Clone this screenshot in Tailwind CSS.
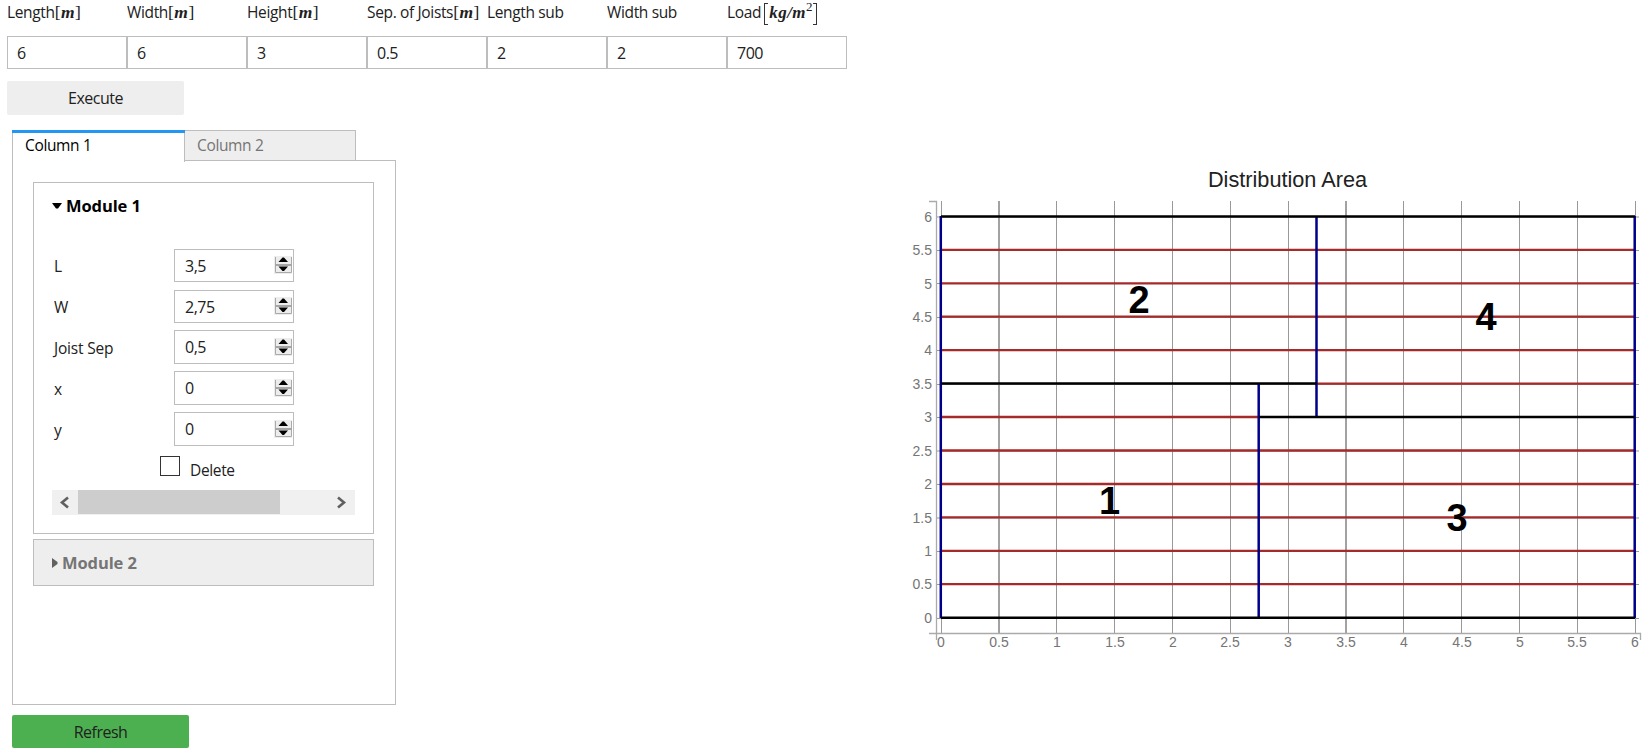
<!DOCTYPE html>
<html lang="en">
<head>
<meta charset="utf-8">
<title>Distribution Area</title>
<script src="https://cdn.jsdelivr.net/npm/@tailwindcss/browser@4"></script>
</head>
<body class="w-[1649px] h-[754px] overflow-hidden bg-white font-['Open_Sans','Noto_Sans',sans-serif] text-[15.5px] leading-5 tracking-[-0.35px] text-[#212121] flex">
<main class="w-[900px] shrink-0">
  <div class="pl-[7px] flex h-[36px] pt-[2px] whitespace-nowrap">
    <div class="w-[120px]">Length<span class="font-['Liberation_Serif',serif] text-[17.5px] tracking-[0.5px]">[<b class="italic">m</b>]</span></div>
    <div class="w-[120px]">Width<span class="font-['Liberation_Serif',serif] text-[17.5px] tracking-[0.5px]">[<b class="italic">m</b>]</span></div>
    <div class="w-[120px]">Height<span class="font-['Liberation_Serif',serif] text-[17.5px] tracking-[0.5px]">[<b class="italic">m</b>]</span></div>
    <div class="w-[120px]">Sep. of Joists<span class="font-['Liberation_Serif',serif] text-[17.5px] tracking-[0.5px]">[<b class="italic">m</b>]</span></div>
    <div class="w-[120px]">Length sub</div>
    <div class="w-[120px]">Width sub</div>
    <div class="w-[120px] flex">Load<span class="ml-[3px] mt-px w-[4px] h-[22px] border border-r-0 border-[#333]"></span><span class="font-['Liberation_Serif',serif] text-[17px] tracking-[0.5px] ml-[1px] mt-px"><b class="italic">kg/m</b></span><span class="font-['Liberation_Serif',serif] text-[13px] -mt-[5px]">2</span><span class="ml-[1px] mt-px w-[4px] h-[22px] border border-l-0 border-[#333]"></span></div>
  </div>
  <div class="pl-[7px] flex text-[16px] tracking-[-0.5px]">
    <div class="w-[120px] h-[33px] border border-[#bdbdbd] pl-[9px] leading-[33px]">6</div>
    <div class="w-[120px] h-[33px] border border-[#bdbdbd] pl-[9px] leading-[33px]">6</div>
    <div class="w-[120px] h-[33px] border border-[#bdbdbd] pl-[9px] leading-[33px]">3</div>
    <div class="w-[120px] h-[33px] border border-[#bdbdbd] pl-[9px] leading-[33px]">0.5</div>
    <div class="w-[120px] h-[33px] border border-[#bdbdbd] pl-[9px] leading-[33px]">2</div>
    <div class="w-[120px] h-[33px] border border-[#bdbdbd] pl-[9px] leading-[33px]">2</div>
    <div class="w-[120px] h-[33px] border border-[#bdbdbd] pl-[9px] leading-[33px]">700</div>
  </div>
  <button class="block ml-[7px] mt-[12px] w-[177px] h-[34px] rounded-[2px] bg-[#eee] text-[16px] tracking-[-0.5px]">Execute</button>
  <div class="ml-[12px] mt-[15px] w-[384px]">
    <div class="flex h-[30px]">
      <div class="relative z-10 w-[173px] h-[32px] bg-white border-l border-r border-[#bdbdbd] pl-[12px] pt-[5px] text-black"><span class="absolute -left-px -right-px top-0 h-[3px] bg-[#2196f3]"></span>Column 1</div>
      <div class="w-[171px] h-[30px] bg-[#eee] border-t border-r border-[#bdbdbd] pl-[12px] pt-[4px] text-[#757575]">Column 2</div>
    </div>
    <div class="h-[545px] border border-[#bdbdbd] pl-[20px] pt-[21px]">
      <section class="w-[341px] h-[352px] border border-[#bdbdbd] pt-[13px] pl-[18px]">
        <h3 class="flex items-center h-5 text-[16.5px] tracking-[-0.1px] font-bold text-black"><svg class="w-[10px] h-[6px] mr-[4px]" viewBox="0 0 10 6"><path d="M0 0H10L6 5.5H4Z"/></svg>Module 1</h3>
        <div class="mt-[33px] flex flex-col gap-[8px]">
          <div class="flex h-[33px]"><label class="w-[122px] pl-[2px] leading-[34px]">L</label><div class="w-[120px] border border-[#bdbdbd] pl-[10px] pr-px flex justify-between leading-[33px] text-[16px] tracking-[-0.5px]">3,5<svg class="mt-[6px] w-[18px] h-[18px]"><use href="#spin"/></svg></div></div>
          <div class="flex h-[33px]"><label class="w-[122px] pl-[2px] leading-[34px]">W</label><div class="w-[120px] border border-[#bdbdbd] pl-[10px] pr-px flex justify-between leading-[33px] text-[16px] tracking-[-0.5px]">2,75<svg class="mt-[6px] w-[18px] h-[18px]"><use href="#spin"/></svg></div></div>
          <div class="flex h-[33px] -mt-px"><label class="w-[122px] pl-[2px] leading-[36px] tracking-[-0.2px]">Joist Sep</label><div class="w-[120px] h-[34px] border border-[#bdbdbd] pl-[10px] pr-px flex justify-between leading-[33px] text-[16px] tracking-[-0.5px]">0,5<svg class="mt-[7px] w-[18px] h-[18px]"><use href="#spin"/></svg></div></div>
          <div class="flex h-[33px]"><label class="w-[122px] pl-[2px] leading-[36px]">x</label><div class="w-[120px] h-[34px] border border-[#bdbdbd] pl-[10px] pr-px flex justify-between leading-[32px] text-[16px] tracking-[-0.5px]">0<svg class="mt-[7px] w-[18px] h-[18px]"><use href="#spin"/></svg></div></div>
          <div class="flex h-[33px]"><label class="w-[122px] pl-[2px] leading-[36px]">y</label><div class="w-[120px] h-[34px] border border-[#bdbdbd] pl-[10px] pr-px flex justify-between leading-[32px] text-[16px] tracking-[-0.5px]">0<svg class="mt-[7px] w-[18px] h-[18px]"><use href="#spin"/></svg></div></div>
        </div>
        <div class="flex ml-[108px] mt-[11px] h-[34px]"><span class="w-[20px] h-[20px] border border-[#333]"></span><span class="ml-[10px] mt-[4px]">Delete</span></div>
        <div class="flex w-[303px] h-[25px] bg-[#f0f0f0]">
          <svg class="w-[26px] h-[25px]" viewBox="0 0 26 25"><path d="M16 7.500L10 12.500L16 17.500" fill="none" stroke="#606060" stroke-width="2.600"/></svg>
          <div class="w-[202px] h-[24px] bg-[#cdcdcd]"></div>
          <svg class="ml-[49px] w-[26px] h-[25px]" viewBox="0 0 26 25"><path d="M9 7.500L15 12.500L9 17.500" fill="none" stroke="#606060" stroke-width="2.600"/></svg>
        </div>
      </section>
      <section class="mt-[5px] w-[341px] h-[47px] bg-[#eee] border border-[#bdbdbd] pl-[18px] flex items-center text-[16.5px] tracking-[-0.1px] font-bold text-[#757575]"><svg class="w-[6px] h-[10px] mr-[4px]" viewBox="0 0 6 10"><path d="M0 0L5.500 4V6L0 10Z" fill="#616161"/></svg>Module 2</section>
    </div>
  </div>
  <button class="block ml-[12px] mt-[10px] w-[177px] h-[33px] rounded-[2px] bg-[#4caf50] text-[16px] tracking-[-0.5px] pt-px">Refresh</button>
</main>
<svg class="w-[749px] h-[754px] shrink-0 tracking-normal" viewBox="900 0 749 754" font-family="Liberation Sans, sans-serif">
  <defs>
    <g id="spin">
      <path d="M0 0H18V18H0Z" fill="#ededed"/>
      <path d="M1.500 1V16.500H17.500V1" fill="none" stroke="#aaa"/>
      <path d="M1 9H18" stroke="#a5a5a5" stroke-width="2"/>
      <path d="M4.500 6L8.500 1.500H10L14 6ZM4.500 10.500H14L10 15H8.500Z" fill="#000"/>
    </g>
  </defs>
  <text x="1287.500" y="187" font-size="21.700" text-anchor="middle" fill="#212121">Distribution Area</text>
  <g fill="none" stroke="#999">
    <path d="M941.500 201V634M1056.500 201V634M1114.500 201V634M1172.500 201V634M1230.500 201V634M1288.500 201V634M1403.500 201V634M1461.500 201V634M1519.500 201V634M1577.500 201V634M1635.500 201V634"/>
    <path d="M999 201V634M1346 201V634" stroke-width="2" stroke="#a2a2a2"/>
    <path d="M936 217H1639M936 250.500H1639M936 283.500H1639M936 317.500H1639M936 350.500H1639M936 384.500H1639M936 417.500H1639M936 451H1639M936 484.500H1639M936 518H1639M936 551.500H1639M936 584.500H1639M936 618.500H1639"/>
    <path d="M929 201.500H936.500V640M929 633.500H1640.500V640" stroke="#aaa" stroke-width="1.300"/>
  </g>
  <path d="M941 249.800H1635M941 283.300H1635M941 316.700H1635M941 350.100H1635M1317 383.600H1635M941 417H1259M941 450.500H1635M941 484H1635M941 517.400H1635M941 550.900H1635M941 584.200H1635" stroke="#a52a2a" stroke-width="2.300"/>
  <path d="M940.800 216V618M1258.700 383.500V618M1316.500 216V417M1634.700 216V618" stroke="#00008b" stroke-width="2.500"/>
  <path d="M941 216.500H1635M941 383.600H1317M1259 417H1635M941 617.700H1635" stroke="#000" stroke-width="2.500"/>
  <g font-size="14" fill="#757575" text-anchor="end">
    <text x="932" y="222">6</text><text x="932" y="255">5.5</text><text x="932" y="288.500">5</text><text x="932" y="322">4.5</text><text x="932" y="355">4</text><text x="932" y="389">3.5</text><text x="932" y="422">3</text><text x="932" y="456">2.5</text><text x="932" y="489">2</text><text x="932" y="523">1.5</text><text x="932" y="556">1</text><text x="932" y="589">0.5</text><text x="932" y="623">0</text>
  </g>
  <g font-size="14" fill="#757575" text-anchor="middle">
    <text x="941" y="647">0</text><text x="999" y="647">0.5</text><text x="1057" y="647">1</text><text x="1115" y="647">1.5</text><text x="1173" y="647">2</text><text x="1230" y="647">2.5</text><text x="1288" y="647">3</text><text x="1346" y="647">3.5</text><text x="1404" y="647">4</text><text x="1462" y="647">4.5</text><text x="1520" y="647">5</text><text x="1577" y="647">5.5</text><text x="1635" y="647">6</text>
  </g>
  <g font-size="38" font-weight="bold" fill="#000" text-anchor="middle">
    <text x="1109.500" y="514">1</text><text x="1139" y="313">2</text><text x="1457" y="530.500">3</text><text x="1486" y="330">4</text>
  </g>
</svg>
</body>
</html>
